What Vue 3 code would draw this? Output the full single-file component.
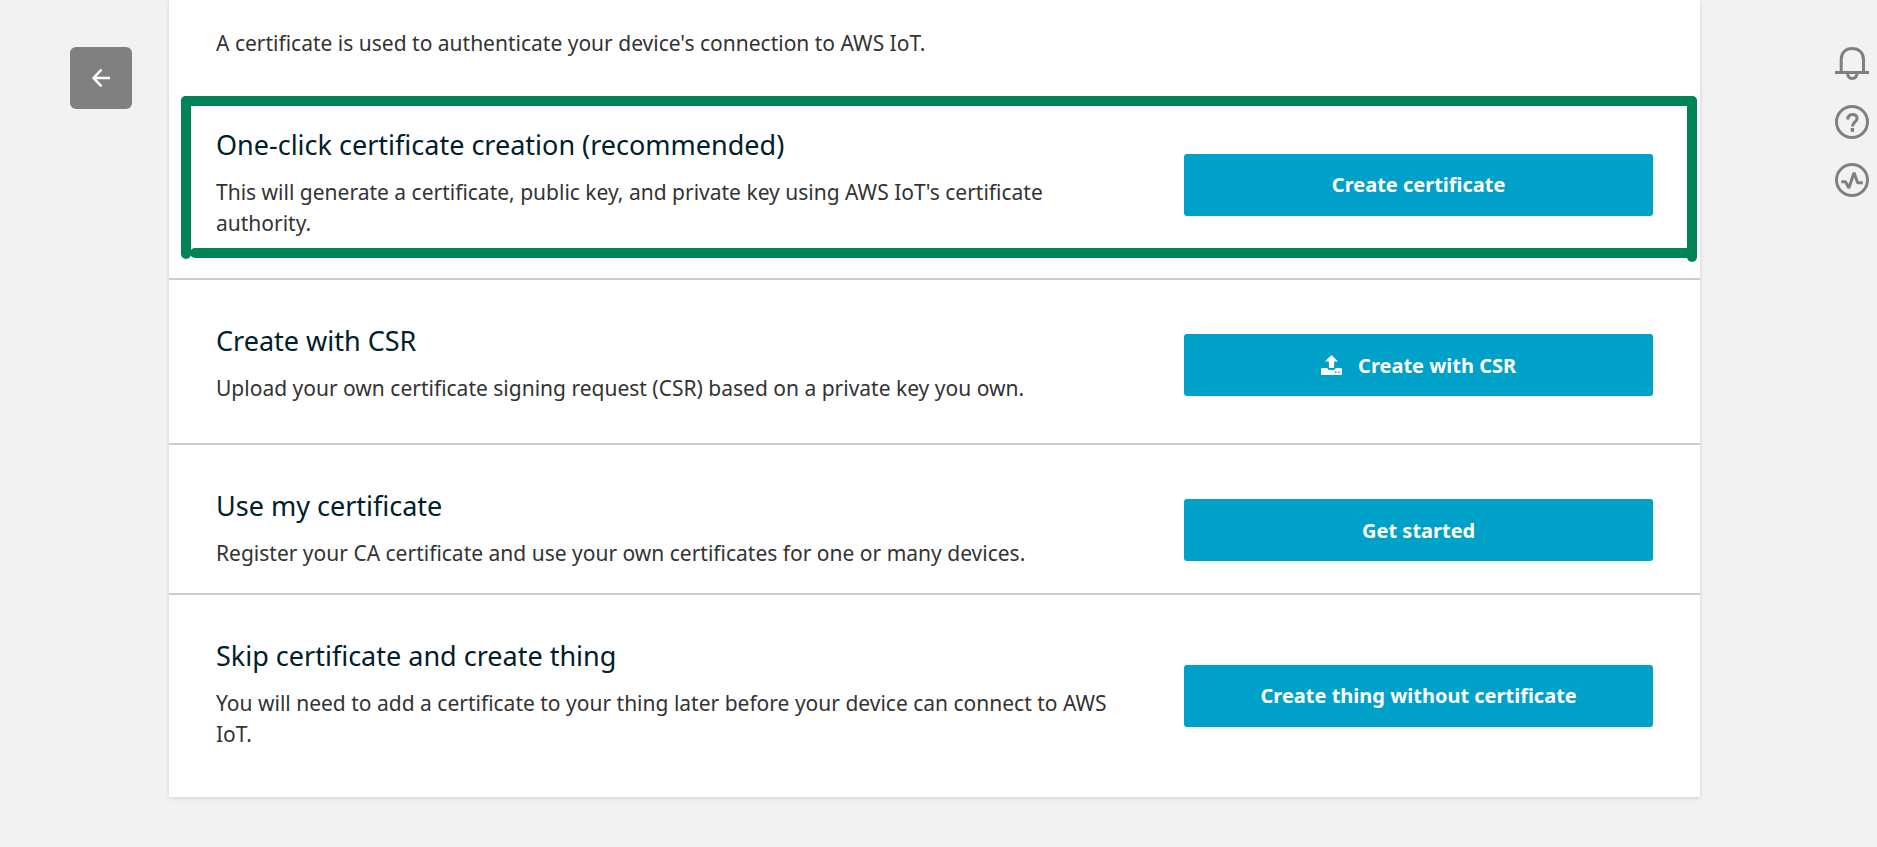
<script setup>
const options = [
  {
    id: 'one-click',
    title: 'One-click certificate creation (recommended)',
    text: "This will generate a certificate, public key, and private key using AWS IoT's certificate authority.",
    action: 'Create certificate',
    highlighted: true,
  },
  {
    id: 'csr',
    title: 'Create with CSR',
    text: 'Upload your own certificate signing request (CSR) based on a private key you own.',
    action: 'Create with CSR',
    upload: true,
  },
  {
    id: 'own',
    title: 'Use my certificate',
    text: 'Register your CA certificate and use your own certificates for one or many devices.',
    action: 'Get started',
  },
  {
    id: 'skip',
    title: 'Skip certificate and create thing',
    text: 'You will need to add a certificate to your thing later before your device can connect to AWS IoT.',
    action: 'Create thing without certificate',
  },
]
</script>

<template>
  <div class="page">
    <nav class="side side-left" aria-label="Back">
      <button class="back" type="button" aria-label="Go back">
        <svg width="20" height="20" viewBox="0 0 20 20" fill="none" stroke="#fff" stroke-width="2.4">
          <path d="M19 10H2.5M10.5 1.6L2.5 10l8 8.4" />
        </svg>
      </button>
    </nav>

    <main class="card">
      <p class="intro">A certificate is used to authenticate your device's connection to AWS IoT.</p>
      <section v-for="o in options" :key="o.id" class="option" :class="'option-' + o.id">
        <div v-if="o.highlighted" class="highlight" aria-hidden="true">
          <span class="stroke stroke-top"></span>
          <span class="stroke stroke-left"></span>
          <span class="stroke stroke-right"></span>
          <span class="stroke stroke-bottom"></span>
        </div>
        <div class="copy">
          <h2>{{ o.title }}</h2>
          <p>{{ o.text }}</p>
        </div>
        <button class="action" type="button">
          <svg v-if="o.upload" width="21" height="20" viewBox="0 0 21 20" aria-hidden="true">
            <path fill="#fff" d="M10.5 0l6.6 6.6h-4V12a1 1 0 0 1-1 1H8.900a1 1 0 0 1-1-1V6.600h-4z" />
            <path fill="#fff" fill-rule="evenodd" d="M1.200 13H6.300q.5 1.900 2.300 1.900h3.800q1.800 0 2.300-1.900h5.100q1.200 0 1.200 1.200v4.500q0 1.300-1.200 1.300H1.200Q0 20 0 18.700v-4.500Q0 13 1.200 13zM14 16.600V18h1.500v-1.400zM17.200 16.600V18h1.500v-1.400z" />
          </svg>
          <span>{{ o.action }}</span>
        </button>
      </section>
    </main>

    <aside class="side side-right" aria-label="Tools">
      <button class="tool" type="button" aria-label="Notifications">
        <svg width="34" height="34" viewBox="0 0 34 34" fill="none" stroke="#808080" stroke-width="3">
          <path d="M6.200 25V12.400C6.200 5.800 10.400 1.600 17.200 1.600S28.500 5.800 28.500 12.400V25M0 25.500h34M12.600 26c0 3.600 1.800 5.400 4.700 5.400S22 29.600 22 26" />
        </svg>
      </button>
      <button class="tool" type="button" aria-label="Help">
        <svg width="34" height="34" viewBox="0 0 34 34" fill="none" stroke="#808080" stroke-width="3">
          <circle cx="17" cy="17" r="15.500" />
          <path d="M12.800 14.400C12.800 11 14.500 9.400 17.400 9.400s4.700 1.600 4.700 4.100c0 3.700-4.700 3.400-4.700 8" />
          <path stroke-width="3.400" d="M17.400 23v3.800" />
        </svg>
      </button>
      <button class="tool" type="button" aria-label="Activity">
        <svg width="34" height="34" viewBox="0 0 34 34" fill="none" stroke="#808080" stroke-width="3">
          <circle cx="17" cy="17" r="15.500" />
          <path stroke-linejoin="bevel" d="M6.300 18.700h4.200l3.400 6.300L19 9.800l3.600 9.900h5.200" />
        </svg>
      </button>
    </aside>
  </div>
</template>

<style>
body {
  background: #f2f2f2;
}
</style>

<style scoped>
.page {
  display: grid;
  grid-template-columns: 169px minmax(0, 1fr) 177px;
  align-items: start;
  min-height: 100vh;
  box-sizing: border-box;
  padding-bottom: 50px;
  font-family: "Noto Sans", "Open Sans", sans-serif;
  font-size: 21px;
  line-height: 31px;
  color: #333;
}

button {
  border: 0;
  padding: 0;
  font: inherit;
  cursor: pointer;
}

.side-left {
  padding: 47px 0 0 70px;
}

.back {
  display: flex;
  align-items: center;
  justify-content: center;
  width: 62px;
  height: 62px;
  border-radius: 6px;
  background: #808080;
}

.side-right {
  display: flex;
  flex-direction: column;
  align-items: flex-end;
  gap: 24px;
  padding: 47px 8px 0 0;
}

.tool {
  display: block;
  width: 34px;
  height: 34px;
  background: transparent;
}

.tool svg {
  display: block;
}

.card {
  background: #fff;
  box-shadow: 0 1px 4px rgba(0, 0, 0, 0.15);
}

p,
h2 {
  margin: 0;
}

.intro {
  padding: 28px 47px 25px;
}

.option {
  position: relative;
  display: grid;
  grid-template-columns: minmax(0, 2fr) minmax(0, 1fr);
  align-items: center;
  gap: 31px;
  padding: 46px 47px 39px;
  border-bottom: 2px solid #ccc;
}

.option-own {
  padding-bottom: 24px;
}

.option-skip {
  padding-bottom: 47px;
  border-bottom: 0;
}

.copy {
  padding-right: 16px;
}

h2 {
  margin-bottom: 18px;
  font-size: 27px;
  font-weight: 400;
  line-height: 29px;
  color: #00202b;
}

.action {
  display: flex;
  align-items: center;
  justify-content: center;
  gap: 16px;
  height: 62px;
  border-radius: 3px;
  background: #00a1c9;
  color: #fff;
  font-size: 20px;
  font-weight: 700;
}

.highlight {
  position: absolute;
  inset: 12px 3px 16px 12px;
  pointer-events: none;
}

.stroke {
  position: absolute;
  border-radius: 5px;
  background: #008456;
}

.stroke-top {
  top: 0;
  left: 0;
  right: 0;
  height: 10px;
}

.stroke-left {
  top: 0;
  bottom: 3px;
  left: 0;
  width: 10px;
}

.stroke-right {
  top: 0;
  bottom: 0;
  right: 0;
  width: 10px;
}

.stroke-bottom {
  bottom: 4px;
  left: 9px;
  right: 0;
  height: 10px;
}
</style>
